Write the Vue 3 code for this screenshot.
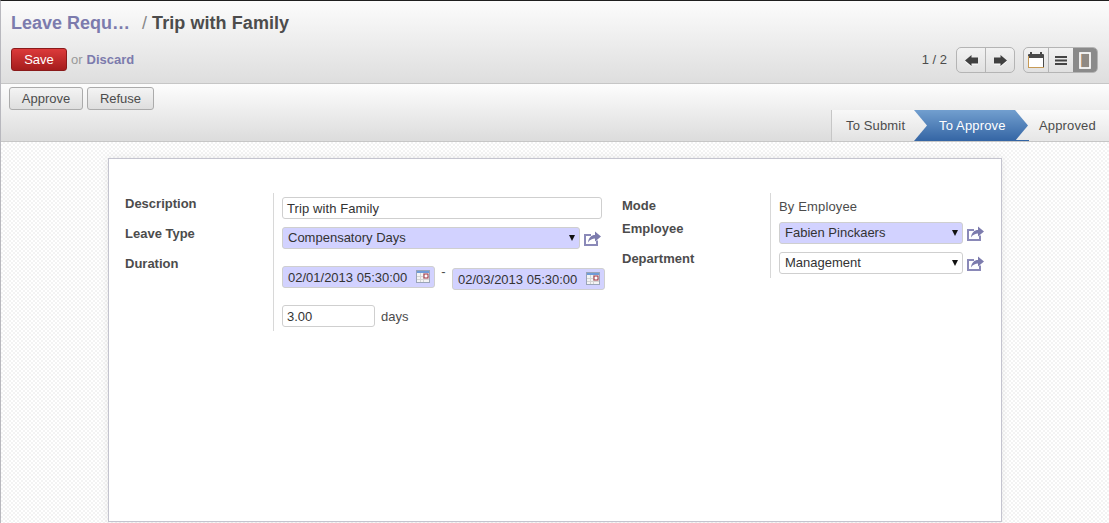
<template>
  <div class="page">
    <header class="view-header">
      <h2 class="title">
        <a class="crumb">Leave Requ…</a>
        <span class="sep">/</span>
        <span class="current">Trip with Family</span>
      </h2>
      <div class="toolbar">
        <div class="actions">
          <button class="btn-save">Save</button>
          <span class="or">or</span>
          <a class="discard">Discard</a>
        </div>
        <div class="pager-area">
          <span class="pager">1 / 2</span>
          <div class="btn-group nav-group">
            <button class="seg">
              <svg class="ico" width="13" height="11" viewBox="0 0 13 11"><path d="M0 5.5 6.5 0V2.500H13V8.500H6.500V11Z" fill="#404040" /></svg>
            </button>
            <button class="seg">
              <svg class="ico" width="13" height="11" viewBox="0 0 13 11"><path d="M13 5.5 6.5 0V2.500H0V8.500H6.500V11Z" fill="#404040" /></svg>
            </button>
          </div>
          <div class="btn-group mode-group">
            <button class="seg">
              <svg width="16" height="16" viewBox="0 0 16 16">
                <path d="M0.5 2.500H15.500V15.500H0.5Z" fill="#fff" stroke="#4a4a4a" />
                <path d="M1 3H15V6H1Z" fill="#4a4a4a" />
                <path d="M3 0V4M13 0V4" stroke="#4a4a4a" stroke-width="2" />
                <path d="M0 15.500H16" stroke="#c79a55" />
                <path d="M0.500 4V15" stroke="#c79a55" />
              </svg>
            </button>
            <button class="seg">
              <svg width="12" height="9" viewBox="0 0 12 9"><path d="M0 1H12M0 4.500H12M0 8H12" stroke="#444" stroke-width="2" /></svg>
            </button>
            <button class="seg active">
              <svg width="12" height="17" viewBox="0 0 12 17">
                <rect x="1" y="1" width="10" height="15" fill="#8f8a85" stroke="#fff" stroke-width="1.700" />
                <rect x="2" y="2" width="1" height="13" fill="#c9a27a" />
              </svg>
            </button>
          </div>
        </div>
      </div>
    </header>

    <div class="status-bar">
      <div class="workflow-btns">
        <button class="btn approve">Approve</button>
        <button class="btn refuse">Refuse</button>
      </div>
      <ul class="steps">
        <li class="step first">To Submit</li>
        <li class="step on">To Approve</li>
        <li class="step last">Approved</li>
      </ul>
    </div>

    <main class="sheet-wrap">
      <section class="sheet">
        <div class="col left-col">
          <div class="labels">
            <label>Description</label>
            <label>Leave Type</label>
            <label>Duration</label>
          </div>
          <div class="fields">
            <div class="input wide">Trip with Family</div>
            <div class="with-link">
              <div class="select req leave-select">Compensatory Days<i class="caret"></i></div>
              <svg class="ext" width="17" height="15" viewBox="0 0 17 15"><use href="#ext-link" /></svg>
            </div>
            <div class="dates">
              <div class="date-input first-date">02/01/2013 05:30:00
                <svg class="cal" width="14" height="13" viewBox="0 0 14 13"><use href="#cal-icon" /></svg>
              </div>
              <span class="dash">-</span>
              <div class="date-input second-date">02/03/2013 05:30:00
                <svg class="cal" width="14" height="13" viewBox="0 0 14 13"><use href="#cal-icon" /></svg>
              </div>
            </div>
            <div class="days-row">
              <div class="input days">3.00</div>
              <span class="days-lbl">days</span>
            </div>
          </div>
        </div>
        <div class="col right-col">
          <div class="labels r-labels">
            <label>Mode</label>
            <label>Employee</label>
            <label>Department</label>
          </div>
          <div class="fields r-fields">
            <div class="mode-val">By Employee</div>
            <div class="with-link">
              <div class="select req emp">Fabien Pinckaers<i class="caret"></i></div>
              <svg class="ext" width="17" height="15" viewBox="0 0 17 15"><use href="#ext-link" /></svg>
            </div>
            <div class="with-link dept-row">
              <div class="select emp">Management<i class="caret"></i></div>
              <svg class="ext" width="17" height="15" viewBox="0 0 17 15"><use href="#ext-link" /></svg>
            </div>
          </div>
        </div>
      </section>
    </main>

    <svg width="0" height="0" class="defs">
      <symbol id="ext-link" viewBox="0 0 17 15">
        <path d="M0 3H7V5H2V13H12V9.500H14V15H0Z" fill="#8a89b8" />
        <path d="M4 11.500C4.500 6.500 7.500 4 11 4V0.500L17 5.500 11 10.500V7.500C8.500 7.500 6 8.500 4 11.500Z" fill="#7c7bad" />
      </symbol>
      <symbol id="cal-icon" viewBox="0 0 14 13">
        <rect x="0.500" y="0.500" width="13" height="12" fill="#f4f4f4" stroke="#9aa4b8" />
        <rect x="1" y="1" width="12" height="2" fill="#6f9bd8" />
        <path d="M1 6.500H13M1 9.500H13M4.500 3V12M7.500 3V12" stroke="#d4d4d4" />
        <rect x="8" y="4" width="4" height="4" fill="#fff" stroke="#9a2a3a" />
      </symbol>
    </svg>
  </div>
</template>

<script setup>
</script>

<style>
html,
body {
  margin: 0;
  overflow: hidden;
}
</style>

<style scoped>
.page {
  width: 1109px;
  height: 523px;
  box-sizing: border-box;
  border-top: 1px solid #1f1f1f;
  border-left: 1px solid #b8b8be;
  font-family: "Liberation Sans", Arial, sans-serif;
  font-size: 13px;
  color: #4c4c4c;
  display: flex;
  flex-direction: column;
  overflow: hidden;
}

.defs {
  position: absolute;
}

.view-header {
  height: 83px;
  flex: none;
  box-sizing: border-box;
  background: linear-gradient(#fcfcfc, #dedede);
  border-bottom: 1px solid #c6c6c6;
  padding: 0 10px;
}

.title {
  margin: 0;
  padding-top: 11px;
  height: 22px;
  line-height: 22px;
  font-size: 18px;
  font-weight: bold;
  display: flex;
  white-space: nowrap;
}

.crumb {
  color: #7c7bad;
}

.sep {
  color: #888;
  font-weight: normal;
  margin-left: 12px;
  margin-right: 5px;
}

.current {
  color: #4c4c4c;
  letter-spacing: 0.07px;
}

.toolbar {
  display: flex;
  justify-content: space-between;
  align-items: flex-start;
  margin-top: 13px;
  height: 26px;
}

.actions {
  display: flex;
  align-items: center;
  margin-top: 1px;
}

.btn-save {
  width: 56px;
  height: 23px;
  padding: 0;
  font: 13px "Liberation Sans", Arial, sans-serif;
  color: #fff;
  background: linear-gradient(#dc3b3b, #a51c1c);
  border: 1px solid #8a1a1a;
  border-radius: 3px;
}

.or {
  color: #999;
  margin-left: 4px;
}

.discard {
  color: #7c7bad;
  font-weight: bold;
  margin-left: 4px;
}

.pager-area {
  display: flex;
  align-items: center;
  margin-right: 1px;
}

.pager {
  margin-right: 9px;
  margin-top: -2px;
  font-size: 13px;
}

.btn-group {
  display: flex;
  height: 26px;
  box-sizing: border-box;
  border: 1px solid #b4b4b4;
  border-radius: 5px;
  overflow: hidden;
  background: linear-gradient(#f2f2f2, #e0e0e0);
}

.nav-group {
  width: 59px;
}

.mode-group {
  width: 75px;
  margin-left: 8px;
}

.seg {
  flex: 1;
  padding: 0;
  border: none;
  background: none;
  display: flex;
  align-items: center;
  justify-content: center;
}

.seg + .seg {
  border-left: 1px solid #b4b4b4;
}

.seg.active {
  background: #8a8a8a;
  border-left: none;
}

.ico {
  filter: drop-shadow(0 1px 0 #fff);
}

.status-bar {
  height: 58px;
  flex: none;
  box-sizing: border-box;
  background: linear-gradient(#fdfdfd, #dcdcdc);
  border-bottom: 1px solid #c6c6c6;
  display: flex;
  justify-content: space-between;
}

.workflow-btns {
  display: flex;
  gap: 4px;
  padding: 3px 0 0 8px;
  align-items: flex-start;
}

.btn {
  height: 23px;
  padding: 0;
  font: 13px "Liberation Sans", Arial, sans-serif;
  color: #4c4c4c;
  background: linear-gradient(#f4f4f4, #dedede);
  border: 1px solid #ababab;
  border-radius: 3px;
}

.approve {
  width: 74px;
}

.refuse {
  width: 67px;
}

.steps {
  list-style: none;
  margin: 26px 0 0;
  padding: 0;
  display: flex;
  height: 31px;
}

.step {
  box-sizing: border-box;
  height: 31px;
  line-height: 31px;
  letter-spacing: 0.15px;
  position: relative;
}

.step.first {
  width: 83px;
  padding-left: 14px;
  border-left: 1px solid #c6c6c6;
  background: linear-gradient(#f8f8f8, #e2e2e2);
}

.step.first::after {
  content: "";
  position: absolute;
  right: -13px;
  top: 0;
  z-index: 2;
  width: 13px;
  height: 31px;
  background: linear-gradient(#f8f8f8, #e2e2e2);
  clip-path: polygon(0 0, 100% 50%, 0 100%);
}

.step.on {
  width: 101px;
  padding-left: 25px;
  color: #fff;
  background: linear-gradient(#729fcf, #3465a4);
}

.step.on::after {
  content: "";
  position: absolute;
  right: -13px;
  top: 0;
  z-index: 2;
  width: 13px;
  height: 31px;
  background: linear-gradient(#729fcf, #3465a4);
  clip-path: polygon(0 0, 100% 50%, 0 100%);
}

.step.last {
  width: 94px;
  padding-left: 24px;
  background: linear-gradient(#fbfbfb, #e6e6e6);
}

.step.last::before {
  content: "";
  position: absolute;
  left: 0;
  bottom: 0;
  width: 14px;
  height: 1px;
  background: #3465a4;
}

.sheet-wrap {
  flex: 1;
  min-height: 0;
  background-color: #fff;
  background-image: conic-gradient(#f3f3f3 25%, #fff 0 50%, #f3f3f3 0 75%, #fff 0);
  background-size: 4px 4px;
  padding: 16px 107px 0;
}

.sheet {
  width: 894px;
  height: 364px;
  box-sizing: border-box;
  background: #fff;
  border: 1px solid #c4c4cf;
  box-shadow: 0 0 8px rgba(0, 0, 0, 0.08);
  padding: 34px 16px 0;
  display: flex;
}

.col {
  display: flex;
  align-items: flex-start;
}

.labels {
  width: 148px;
  flex: none;
  display: flex;
  flex-direction: column;
  gap: 15px;
  padding-top: 3px;
  font-weight: bold;
}

.labels label {
  line-height: 15px;
}

.fields {
  border-left: 1px solid #d8d8d8;
  padding-left: 8px;
  display: flex;
  flex-direction: column;
}

.left-col .fields {
  width: 332px;
  height: 138px;
  padding-top: 4px;
  box-sizing: border-box;
}

.right-col {
  margin-left: 17px;
}

.r-labels {
  gap: 8px;
  padding-top: 5px;
}

.r-labels label:last-child {
  margin-top: 7px;
}

.r-fields {
  width: 215px;
  height: 85px;
  box-sizing: border-box;
  padding-top: 6px;
}

.input {
  box-sizing: border-box;
  height: 22px;
  line-height: 21px;
  padding-left: 4px;
  border: 1px solid #cfcfcf;
  border-radius: 3px;
  background: #fff;
  color: #333;
}

.wide {
  width: 320px;
  letter-spacing: 0.1px;
}

.with-link {
  display: flex;
  align-items: center;
  margin-top: 8px;
}

.select {
  box-sizing: border-box;
  height: 22px;
  line-height: 20px;
  padding-left: 5px;
  border: 1px solid #cfcfcf;
  border-radius: 3px;
  background: #fff;
  color: #333;
  position: relative;
  flex: none;
}

.req {
  background: #d2d2ff;
}

.leave-select {
  width: 298px;
}

.emp {
  width: 184px;
}

.caret {
  position: absolute;
  right: 4px;
  top: 7px;
  border-style: solid;
  border-width: 6px 3.5px 0;
  border-color: #111 transparent transparent;
}

.ext {
  margin-left: 4px;
  flex: none;
}

.dates {
  display: flex;
  align-items: flex-start;
  margin-top: 17px;
}

.date-input {
  box-sizing: border-box;
  width: 153px;
  height: 22px;
  line-height: 22px;
  padding-left: 5px;
  border: 1px solid #cfcfcf;
  border-radius: 3px;
  background: #d2d2ff;
  color: #333;
  position: relative;
}

.second-date {
  margin-top: 2px;
}

.dash {
  width: 17px;
  text-align: center;
  line-height: 12px;
}

.cal {
  position: absolute;
  right: 4px;
  top: 3px;
}

.days-row {
  display: flex;
  align-items: center;
  margin-top: 15px;
}

.days {
  width: 93px;
}

.days-lbl {
  margin-left: 6px;
}

.mode-val {
  line-height: 15px;
  letter-spacing: 0.15px;
}

.r-fields .with-link {
  margin-top: 8px;
}

.r-fields .dept-row {
  margin-top: 8px;
}
</style>
